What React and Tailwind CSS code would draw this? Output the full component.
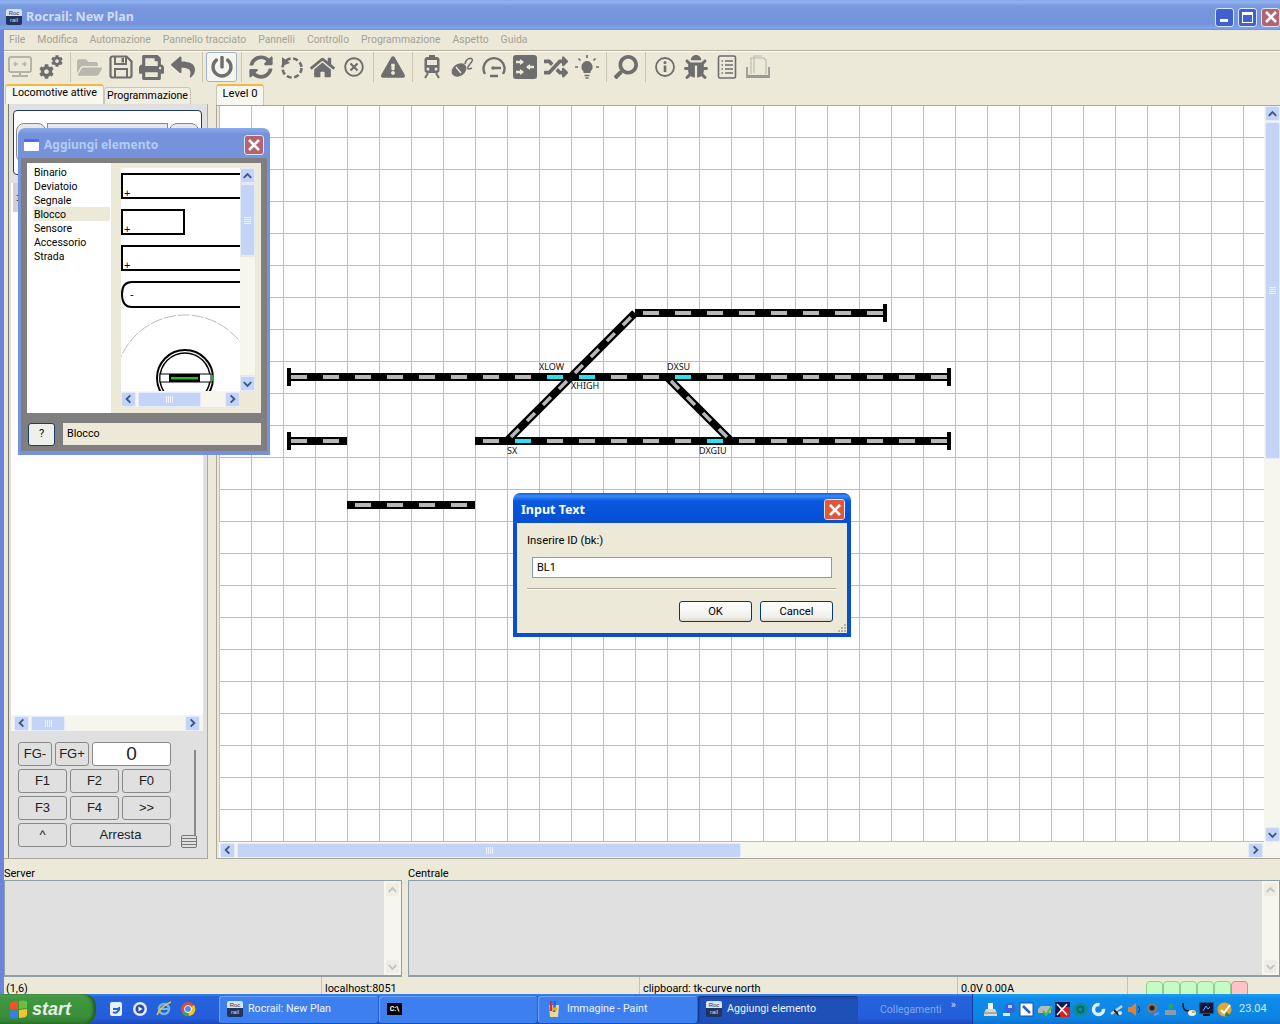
import React from "react";
import { FaCog, FaFolderOpen, FaPrint, FaReply, FaPowerOff, FaSyncAlt, FaHome, FaRegTimesCircle, FaExclamationTriangle, FaRandom, FaSearch, FaBug } from "react-icons/fa";

const Svg = ({ children, c = "#6e6e6e" }) => (
  <svg width="24" height="24" viewBox="0 0 24 24" fill="none" stroke={c} color={c}>{children}</svg>
);

const icons = {
  pc: (
    <Svg c="#b4b4aa">
      <rect x="1" y="2" width="22" height="15" rx="2" strokeWidth="2" />
      <path d="M6 9h4M8 7l-2 2 2 2M18 9h-4M16 7l2 2-2 2" strokeWidth="1.3" />
      <path d="M12 17v5M4 21h16" strokeWidth="2" />
    </Svg>
  ),
  save: (
    <Svg>
      <path d="M1.500 3.500a2 2 0 0 1 2-2h14l5 5v14a2 2 0 0 1-2 2h-17a2 2 0 0 1-2-2z" strokeWidth="2.200" />
      <path d="M6 2v7h11V2" strokeWidth="2" />
      <rect x="12.500" y="3" width="2.500" height="4.500" fill="#6e6e6e" stroke="none" />
      <path d="M6 23v-9h12v9" strokeWidth="2" />
    </Svg>
  ),
  dashed: (
    <Svg>
      <circle cx="12" cy="13" r="9.5" strokeWidth="2.6" strokeDasharray="5 2.6" />
      <path d="M2 2v9l8-3z" fill="#6e6e6e" stroke="none" />
    </Svg>
  ),
  train: (
    <Svg>
      <rect x="4.500" y="2" width="15" height="16" rx="3" fill="#6e6e6e" stroke="none" />
      <rect x="7" y="5" width="10" height="5" fill="#ece9d8" stroke="none" />
      <circle cx="8" cy="14" r="1.500" fill="#ece9d8" stroke="none" />
      <circle cx="16" cy="14" r="1.500" fill="#ece9d8" stroke="none" />
      <path d="M9 1h6M8 18l-3 5M16 18l3 5" strokeWidth="2" />
    </Svg>
  ),
  mouse: (
    <Svg>
      <ellipse cx="8" cy="15" rx="8" ry="6" fill="#6e6e6e" stroke="none" transform="rotate(-35 8 15)" />
      <path d="M5 12l5 6" stroke="#ece9d8" strokeWidth="1.4" />
      <path d="M14 9c1-5 5-7 7-5s-3 5-4 8 2 2 4 1" strokeWidth="1.5" />
    </Svg>
  ),
  gauge: (
    <Svg>
      <path d="M3 19a10.5 10.5 0 1 1 18 0" strokeWidth="2.4" />
      <path d="M12 13h7M8 21h8" strokeWidth="2.4" />
      <circle cx="11" cy="13" r="1.8" fill="#6e6e6e" stroke="none" />
    </Svg>
  ),
  net: (
    <Svg>
      <rect x="0" y="0" width="24" height="24" rx="3" fill="#6e6e6e" stroke="none" />
      <path d="M3 7h7M3 17h7M14 12h7" stroke="#ece9d8" strokeWidth="2.4" />
      <path d="M7 4l4 3-4 3zM7 14l4 3-4 3zM17 9l-4 3 4 3z" fill="#ece9d8" stroke="none" />
    </Svg>
  ),
  bulb: (
    <Svg>
      <path d="M12 6a6 6 0 0 0-3.5 10.5V18h7v-1.500A6 6 0 0 0 12 6z" fill="#6e6e6e" stroke="none" />
      <path d="M9.500 20.500h5M10.500 23h3M12 0v3M0 12h3M21 12h3M3.500 3.500l2 2M20.500 3.500l-2 2" strokeWidth="1.700" />
    </Svg>
  ),
  info: (
    <Svg>
      <circle cx="12" cy="12" r="9" strokeWidth="1.800" />
      <circle cx="12" cy="7.500" r="1.500" fill="#6e6e6e" stroke="none" />
      <path d="M12 10.500v6.500" strokeWidth="2.600" />
    </Svg>
  ),
  list: (
    <Svg>
      <rect x="3.500" y="1" width="17" height="22" rx="1.500" strokeWidth="1.600" />
      <path d="M6.500 6h1.500M10 6h8M6.500 10h1.500M10 10h8M6.500 14h1.500M10 14h8M6.500 18h1.500M10 18h8" strokeWidth="1.400" />
    </Svg>
  ),
  copy: (
    <Svg c="#9a9a92">
      <path d="M1 12v10h22V12" strokeWidth="1.800" />
      <path d="M5 19V3h13l2 2v14" strokeWidth="1.100" stroke="#b8b8b0" />
      <path d="M8 18V1h8" strokeWidth="1.100" stroke="#b8b8b0" />
      <path d="M1 21h22" strokeWidth="2.200" />
    </Svg>
  ),
};

const Sep = () => (
  <div className="w-[8px] h-[30px] flex justify-center shrink-0">
    <div className="w-px h-full bg-[#c8c5b4]" />
  </div>
);
const Btn = ({ children, active }) => (
  <div className={active ? "w-[31px] h-[30px] shrink-0 flex items-center justify-center rounded-[3px] border border-[#a3b1c9] bg-[#f6f6f0]" : "w-[31px] h-[30px] shrink-0 flex items-center justify-center"}>
    {children}
  </div>
);
const G = "#6e6e6e";

const Toolbar = () => (
  <div className="h-[32px] flex items-start">
    <Btn>{icons.pc}</Btn>
    <Btn>
      <span className="relative block w-[24px] h-[24px]">
        <span className="absolute left-0 bottom-0"><FaCog size={15} color={G} /></span>
        <span className="absolute right-0 top-0"><FaCog size={12} color={G} /></span>
      </span>
    </Btn>
    <Sep />
    <Btn><FaFolderOpen size={25} color="#b8b8ae" /></Btn>
    <Btn>{icons.save}</Btn>
    <Btn><FaPrint size={25} color={G} /></Btn>
    <Btn><FaReply size={24} color={G} /></Btn>
    <Sep />
    <Btn active><FaPowerOff size={22} color={G} /></Btn>
    <Sep />
    <Btn><FaSyncAlt size={24} color={G} /></Btn>
    <Btn>{icons.dashed}</Btn>
    <Btn><FaHome size={25} color={G} /></Btn>
    <Btn><FaRegTimesCircle size={20} color={G} /></Btn>
    <Sep />
    <Btn><FaExclamationTriangle size={24} color={G} /></Btn>
    <Sep />
    <Btn>{icons.train}</Btn>
    <Btn>{icons.mouse}</Btn>
    <Btn>{icons.gauge}</Btn>
    <Btn>{icons.net}</Btn>
    <Btn><FaRandom size={24} color={G} /></Btn>
    <Btn>{icons.bulb}</Btn>
    <Sep />
    <Btn><span className="scale-x-[-1] flex"><FaSearch size={24} color={G} /></span></Btn>
    <Sep />
    <Btn>{icons.info}</Btn>
    <Btn><FaBug size={24} color={G} /></Btn>
    <Btn>{icons.list}</Btn>
    <Btn>{icons.copy}</Btn>
  </div>
);

const arrows = { up: "M3 9l4-4 4 4", down: "M3 5l4 4 4-4", left: "M9 3L5 7l4 4", right: "M5 3l4 4-4 4" };
const SBtn = ({ dir, off }) => (
  <div className={off ? "w-[15px] h-[15px] shrink-0 rounded-[2px] border border-[#f8f8f2] bg-[#eeede6] flex items-center justify-center" : "w-[15px] h-[15px] shrink-0 rounded-[2px] border border-[#e4ecfc] bg-[#c3d4f7] flex items-center justify-center"}>
    <svg width="14" height="14" viewBox="0 0 14 14" fill="none" stroke={off ? "#c4c4bc" : "#3f5585"} strokeWidth="2"><path d={arrows[dir]} /></svg>
  </div>
);
const Grip = ({ v }) => (
  <div className={v ? "flex flex-col gap-px" : "flex gap-px"}>
    {[0, 1, 2, 3].map((i) => <div key={i} className={v ? "w-[7px] h-px bg-[#eef3fd]" : "w-px h-[7px] bg-[#eef3fd]"} />)}
  </div>
);

const MenuItems = ["File", "Modifica", "Automazione", "Pannello tracciato", "Pannelli", "Controllo", "Programmazione", "Aspetto", "Guida"];

const Fn = ({ w, children, white, big }) => (
  <div className={`${w} ${white ? "bg-white" : "bg-[#e0e0e0]"} ${big ? "text-[19px]" : "text-[13px]"} h-[24px] shrink-0 rounded-[3px] border border-[#8a8a8a] flex items-center justify-center text-[#222] font-['Liberation_Sans',sans-serif]`}>
    {children}
  </div>
);

const LeftPanel = () => (
  <div className="w-[204px] shrink-0 flex flex-col">
    <div className="h-[20px] flex items-start pl-px">
      <div className="w-[99px] h-[20px] shrink-0 rounded-t-[3px] border-t-[2px] border-t-[#f5b93e] border-x border-x-[#c9c6b6] bg-[#f7f6ef] flex items-center justify-center pb-[3px] text-[10.700px] text-black">Locomotive attive</div>
      <div className="mt-[3px] w-[87px] h-[18px] rounded-t-[3px] border border-[#c9c6b6] bg-[#f0eee2] flex items-center justify-center pb-px text-[10.600px] text-black">Programmazione</div>
    </div>
    <div className="flex-1 flex flex-col pl-[4px] border-r border-b border-r-[#aca899] border-b-[#aca899]">
      <div className="flex-1 flex flex-col border-l border-l-[#7c7c70] bg-[#e0e0e0] pr-[4px]">
        <div className="mt-[6px] ml-[4px] mr-px h-[65px] rounded-[4px] border border-[#1c3a6b] bg-white px-[2px] pt-[12px] flex gap-px">
          <div className="w-[30px] h-[40px] rounded-[8px] border border-[#888] bg-[#e8e8e8]" />
          <div className="flex-1 h-[40px] border border-[#888] bg-[#e8e8e8]" />
          <div className="w-[30px] h-[40px] rounded-[8px] border border-[#888] bg-[#e8e8e8]" />
        </div>
        <div className="mt-[8px] ml-[2px] flex-1 flex flex-col bg-white">
          <div className="h-[29px] ml-[2px] bg-[#d0d0d0] flex items-center pl-[3px] text-[10px]">:</div>
        </div>
        <div className="ml-[2px] h-[16px] flex items-center bg-[#f6f5ee] px-[3px] gap-[2px]">
          <SBtn dir="left" />
          <div className="w-[34px] h-[15px] rounded-[2px] border border-[#e4ecfc] bg-[#c3d4f7] flex items-center justify-center"><Grip /></div>
          <div className="flex-1" />
          <SBtn dir="right" />
        </div>
        <div className="h-[127px] pt-[11px] pl-[9px] flex">
          <div className="w-[153px] flex flex-col gap-[3px]">
            <div className="flex gap-[3px]">
              <Fn w="w-[34px]">FG-</Fn>
              <Fn w="w-[34px]">FG+</Fn>
              <Fn w="w-[79px]" white big>0</Fn>
            </div>
            <div className="flex gap-[3px]"><Fn w="w-[49px]">F1</Fn><Fn w="w-[49px]">F2</Fn><Fn w="w-[49px]">F0</Fn></div>
            <div className="flex gap-[3px]"><Fn w="w-[49px]">F3</Fn><Fn w="w-[49px]">F4</Fn><Fn w="w-[49px]">&gt;&gt;</Fn></div>
            <div className="flex gap-[3px]"><Fn w="w-[49px]">^</Fn><Fn w="w-[101px]">Arresta</Fn></div>
          </div>
          <div className="relative ml-[10px] w-[16px] h-[98px] mt-[8px] flex justify-end">
            <div className="w-[2px] h-[88px] mr-px bg-[#8a8a8a]" />
            <div className="absolute left-0 bottom-0 w-[16px] h-[13px] rounded-[2px] border border-[#777] flex flex-col justify-evenly bg-[#e0e0e0]">
              <div className="h-px bg-[#777]" /><div className="h-px bg-[#777]" /><div className="h-px bg-[#777]" />
            </div>
          </div>
        </div>
      </div>
    </div>
  </div>
);

const Track = ({ x1, y1, x2 }) => {
  const dashes = [];
  for (let x = x1 + 8 - ((x1 + 8 - 291) % 32 + 32) % 32; x < x2 - 3; x += 32) {
    if (x >= x1) dashes.push(x);
  }
  return (
    <g>
      <rect x={x1} y={y1 - 4} width={x2 - x1} height="8" fill="#000" />
      {dashes.map((x) => <rect key={x} x={x} y={y1 - 2} width="16" height="4" fill={[`547,377`, `579,377`, `675,377`, `515,441`, `707,441`].includes(`${x},${y1}`) ? "#22e6ee" : "#b8b8b8"} />)}
    </g>
  );
};
const Diag = ({ x1, y1, x2, y2 }) => (
  <g>
    <line x1={x1} y1={y1} x2={x2} y2={y2} stroke="#000" strokeWidth="8" />
    <line x1={x1} y1={y1} x2={x2} y2={y2} stroke="#b8b8b8" strokeWidth="3.500" strokeDasharray="11.3 11.3" strokeDashoffset="-5.65" />
  </g>
);
const End = ({ x, y }) => <rect x={x} y={y - 9} width="4" height="18" fill="#000" />;
const Lbl = ({ x, y, children }) => (
  <text x={x} y={y} fontSize="9" fill="#111" fontFamily="'Noto Sans',sans-serif">{children}</text>
);

const CanvasPanel = () => (
  <div className="flex-1 flex flex-col ml-[8px] min-w-0">
    <div className="h-[21px] flex items-start">
      <div className="w-[48px] h-[21px] rounded-t-[3px] border-t-[2px] border-t-[#f5b93e] border-x border-x-[#c9c6b6] bg-[#f7f6ef] flex items-center justify-center pb-[3px] text-[11.200px] text-black">Level 0</div>
    </div>
    <div className="flex-1 flex flex-col border-l border-b border-t border-[#aca899] pl-[2px] bg-[#ece9d8]">
      <div className="flex-1 flex">
        <div className="relative flex-1 bg-white bg-[linear-gradient(to_right,transparent_31px,#bdbdbd_31px),linear-gradient(to_bottom,transparent_31px,#bdbdbd_31px)] bg-[size:32px_32px] bg-[position:1px_0px] overflow-hidden">
          <svg className="absolute left-0 top-0" width="1045" height="736" viewBox="219 106 1045 736">
            <Track x1={635} y1={313} x2={885} />
            <Track x1={287} y1={377} x2={949} />
            <Track x1={287} y1={441} x2={347} />
            <Track x1={475} y1={441} x2={949} />
            <Track x1={347} y1={505} x2={475} />
            <Diag x1={507} y1={441} x2={635} y2={313} />
            <Diag x1={667} y1={377} x2={731} y2={441} />
            <End x={883} y={313} /><End x={287} y={377} /><End x={947} y={377} /><End x={287} y={441} /><End x={947} y={441} />
            <Lbl x={539} y={370}>XLOW</Lbl>
            <Lbl x={571} y={389}>XHIGH</Lbl>
            <Lbl x={507} y={454}>SX</Lbl>
            <Lbl x={667} y={370}>DXSU</Lbl>
            <Lbl x={699} y={454}>DXGIU</Lbl>
          </svg>
        </div>
        <div className="w-[16px] shrink-0 flex flex-col gap-px items-center bg-[#f6f5ee]">
          <SBtn dir="up" />
          <div className="w-[15px] h-[337px] rounded-[2px] border border-[#e4ecfc] bg-[#c3d4f7] flex items-center justify-center"><Grip v /></div>
          <div className="flex-1" />
          <SBtn dir="down" />
        </div>
      </div>
      <div className="h-[16px] flex items-center bg-[#f6f5ee] pl-px pr-[17px] gap-[2px]">
        <SBtn dir="left" />
        <div className="w-[504px] h-[15px] rounded-[2px] border border-[#e4ecfc] bg-[#c3d4f7] flex items-center justify-center"><Grip /></div>
        <div className="flex-1" />
        <SBtn dir="right" />
      </div>
    </div>
  </div>
);

const LogBox = ({ label, className }) => (
  <div className={`${className} flex flex-col`}>
    <div className="h-[14px] text-[11px] leading-[15px] text-black">{label}</div>
    <div className="flex-1 flex border-t border-b-[2px] border-x border-[#8e9fa6] bg-[#e0e0e0]">
      <div className="flex-1" />
      <div className="w-[17px] flex flex-col justify-between bg-[#f6f5ee] py-px items-center">
        <SBtn dir="up" off /><SBtn dir="down" off />
      </div>
    </div>
  </div>
);

const Status = () => (
  <div className="h-[17px] flex text-[10.900px] leading-[23px] text-black overflow-hidden">
    <div className="w-[317px] pl-[2px]">(1,6)</div>
    <div className="w-[318px] pl-[3px] border-l border-l-[#c6c3b2]">localhost:8051</div>
    <div className="w-[318px] pl-[3px] border-l border-l-[#c6c3b2]">clipboard: tk-curve north</div>
    <div className="w-[170px] pl-[3px] border-l border-l-[#c6c3b2]">0.0V 0.00A</div>
    <div className="flex-1 border-l border-l-[#c6c3b2] pl-[18px] pt-[4px] flex">
      {[0, 1, 2, 3, 4].map((i) => <div key={i} className="w-[17px] h-[20px] rounded-t-[4px] border border-[#8ed08e] bg-[#c4fcc4]" />)}
      <div className="w-[17px] h-[20px] rounded-t-[4px] border border-[#d88a8a] bg-[#fcc4c4]" />
    </div>
  </div>
);

const RocIcon = () => (
  <div className="w-[16px] h-[16px] shrink-0 rounded-[2px] overflow-hidden flex flex-col font-['Liberation_Sans',sans-serif] text-[6px] leading-[8px] text-center">
    <div className="h-[7px] bg-[#d8e2f4] text-[#334]">Roc</div>
    <div className="flex-1 bg-[#1e3560] text-[#dde]">rail</div>
  </div>
);

const TBtn = ({ w, active, icon, children }) => (
  <div className={`${w} h-[27px] shrink-0 rounded-[3px] flex items-center gap-[5px] pl-[8px] text-[10.700px] text-[#eef3ff] ${active ? "bg-[#1f50b8] shadow-[inset_1px_1px_2px_#12357f]" : "bg-[#3d7fee] shadow-[inset_1px_1px_1px_#6fa5f7]"}`}>
    {icon}
    <span className="pt-px">{children}</span>
  </div>
);

const T = ({ children }) => <svg width="15" height="15" viewBox="0 0 15 15" className="shrink-0">{children}</svg>;

const trayIcons = [
  <T key="0"><path d="M3 7h9l2 4v3H1v-3z" fill="#d8d8d0" /><path d="M5 1h5v6H5z" fill="#f2f2f2" /><path d="M1 11h13" stroke="#777" /></T>,
  <T key="1"><circle cx="9" cy="6" r="5.500" fill="#3a62d8" /><path d="M2 11h7v3H2z" fill="#e6e6e6" /><path d="M7 3h4v3H7z" fill="#b8d0f4" /></T>,
  <T key="2"><rect x="1" y="1" width="13" height="13" fill="#fff" stroke="#1c4ea8" /><path d="M4 4l7 7" stroke="#2a63c8" strokeWidth="2.500" /></T>,
  <T key="3"><path d="M1 7l3-3h9l1 3v4H1z" fill="#b8b8b4" /><path d="M6 9l3 4 6-9" fill="none" stroke="#3cc43c" strokeWidth="2" /></T>,
  <T key="4"><rect x="0" y="0" width="15" height="15" fill="#101850" /><path d="M5 5h10v10H5z" fill="#d82020" /><path d="M2 2l10 11M12 2L2 13" stroke="#fff" strokeWidth="1.500" /></T>,
  <T key="5"><circle cx="7.500" cy="7.500" r="7" fill="#0d8d8f" /><circle cx="7.500" cy="7.500" r="3" fill="none" stroke="#0a6c70" strokeWidth="2" /></T>,
  <T key="6"><circle cx="7.500" cy="7.500" r="5" fill="none" stroke="#dff1ff" strokeWidth="3.500" strokeDasharray="24 6" /></T>,
  <T key="7"><path d="M2 12l11-8" stroke="#d0d0d0" strokeWidth="2.500" /><path d="M5 8l5 5" stroke="#222" strokeWidth="2" /><circle cx="11" cy="11" r="2" fill="#e6e6e6" /></T>,
  <T key="8"><path d="M1 5h3l5-4v13l-5-4H1z" fill="#e08030" /><path d="M11 4c2 2 2 5 0 7" stroke="#222" fill="none" /></T>,
  <T key="9"><circle cx="7" cy="6" r="5.500" fill="#777" /><circle cx="7" cy="6" r="2.500" fill="#222" /><path d="M9 13l5-2" stroke="#7b8ee8" strokeWidth="2" /></T>,
  <T key="10"><path d="M2 8h11v5H2z" fill="#8a9ab0" /><path d="M6 1l5 3-5 4z" fill="#22b04a" /></T>,
  <T key="11"><path d="M2 1c0 6 1 8 6 8" fill="none" stroke="#111" strokeWidth="1.500" /><ellipse cx="11" cy="11" rx="4" ry="3" fill="#eee" /><path d="M11 10h3" stroke="#e0b020" strokeWidth="2" /></T>,
  <T key="12"><rect x="1" y="1" width="13" height="10" fill="#101840" stroke="#222" /><path d="M4 9l3-5 2 3 2-2" stroke="#6fa8f0" fill="none" /><path d="M4 13h7" stroke="#111" strokeWidth="2" /></T>,
  <T key="13"><circle cx="7.500" cy="7.500" r="7" fill="#e0a830" /><path d="M4 8l3 3 6-8" fill="none" stroke="#fff" strokeWidth="2" /><path d="M9 10l5 4H8z" fill="#228838" /></T>,
];

const Taskbar = () => (
  <div className="h-[30px] shrink-0 flex items-center bg-[linear-gradient(to_bottom,#3e86f2_0px,#2563dc_3px,#245edb_24px,#1a49b8_30px)]">
    <div className="w-[96px] h-[30px] shrink-0 rounded-r-[12px] bg-[linear-gradient(to_bottom,#5fa65f_0px,#3f983f_4px,#3a8f3a_22px,#2f7a2f_30px)] flex items-center pl-[10px] gap-[5px] shadow-[inset_-3px_0_3px_#235f23]">
      <div className="grid grid-cols-2 gap-px w-[17px] h-[17px] -skew-y-6 shrink-0">
        <div className="bg-[#e8562a] rounded-tl-[3px]" /><div className="bg-[#6cbf3c] rounded-tr-[3px]" />
        <div className="bg-[#3b7ee8] rounded-bl-[3px]" /><div className="bg-[#f4c430] rounded-br-[3px]" />
      </div>
      <span className="font-['Liberation_Sans',sans-serif] italic font-bold text-[18px] text-[#e8eee8]">start</span>
    </div>
    <div className="w-[123px] shrink-0 flex items-center pl-[12px] gap-[8px]">
      <svg width="16" height="16" viewBox="0 0 16 16"><rect x="2" y="1" width="12" height="14" rx="2" fill="#e8f0fc" /><path d="M5 11c3 2 7-1 6-5M5 8h6" stroke="#2a68c8" strokeWidth="2" fill="none" /></svg>
      <svg width="16" height="16" viewBox="0 0 16 16"><circle cx="8" cy="8" r="7" fill="#e8e8ef" /><circle cx="8" cy="8" r="4.500" fill="#2a4fa8" /><path d="M6.500 5.500l4 2.500-4 2.500z" fill="#fff" /></svg>
      <svg width="16" height="16" viewBox="0 0 16 16"><ellipse cx="8" cy="8" rx="5" ry="5" fill="none" stroke="#6fb8ea" strokeWidth="2.500" /><path d="M4 8h8" stroke="#6fb8ea" strokeWidth="2" /><path d="M1 14c2-5 8-11 14-13" stroke="#f0c040" strokeWidth="1.500" fill="none" /></svg>
      <svg width="16" height="16" viewBox="0 0 16 16"><circle cx="8" cy="8" r="7" fill="#dd4b39" /><path d="M8 8L2 12a7 7 0 0 0 7 3z" fill="#3aa757" /><path d="M8 8l1 7a7 7 0 0 0 5-11z" fill="#fbc116" /><circle cx="8" cy="8" r="3.500" fill="#4a8af4" stroke="#fff" /></svg>
    </div>
    <TBtn w="w-[159px]" icon={<RocIcon />}>Rocrail: New Plan</TBtn>
    <div className="w-px shrink-0" />
    <TBtn w="w-[158px]" icon={<div className="w-[15px] h-[12px] bg-black text-white text-[7px] leading-[12px] text-center font-bold">C:\</div>} />
    <div className="w-px shrink-0" />
    <TBtn w="w-[159px]" icon={<svg width="16" height="18" viewBox="0 0 16 18"><path d="M3 5h10l-1 12H4z" fill="#e8d8a0" /><path d="M5 1v10" stroke="#d83030" strokeWidth="2.500" /><path d="M9 1l-1 11" stroke="#3060d8" strokeWidth="2.500" /><path d="M6 9h5" stroke="#e0b020" strokeWidth="3" /></svg>}>Immagine - Paint</TBtn>
    <div className="w-px shrink-0" />
    <TBtn w="w-[160px]" active icon={<RocIcon />}>Aggiungi elemento</TBtn>
    <div className="w-[114px] shrink-0 flex items-center pl-[22px] pt-px text-[10.500px] text-[#7fa8ea]">
      <span>Collegamenti</span>
      <span className="ml-[9px] -mt-[9px] text-[11px] text-[#c9dcfa]">»</span>
    </div>
    <div className="flex-1 h-[30px] flex items-center pl-[10px] gap-[3px] border-l border-l-[#0c3f9a] bg-[linear-gradient(to_bottom,#1aa0f2_0px,#0f8cea_4px,#0c84e4_24px,#0b6fd0_30px)]">
      {trayIcons}
      <span className="ml-[4px] pt-px text-[11px] text-[#d6e8fb]">23.04</span>
    </div>
  </div>
);

const WinBtn = ({ children, red, w = "w-[19px]", h = "h-[19px]" }) => (
  <div className={`${w} ${h} shrink-0 rounded-[3px] border border-[#dbe5fa] flex items-center justify-center ${red ? "bg-[#b5636f]" : "bg-[#3f62cf]"}`}>{children}</div>
);
const XIcon = ({ s = 14 }) => (
  <svg width={s} height={s} viewBox="0 0 14 14" stroke="#fff" strokeWidth="2.600"><path d="M2 2l10 10M12 2L2 12" /></svg>
);

const Preview = () => (
  <svg width="119" height="223" viewBox="121 168 119 223" className="block">
    <g fill="none" stroke="#000" strokeWidth="2">
      <path d="M240 174H122v24h118" />
      <path d="M122 210h62v24h-62z" />
      <path d="M240 246H122v24h118" />
      <path d="M240 282H132q-10 0-10 12 0 13 10 13h108" />
    </g>
    <g fontSize="11" fill="#000" fontFamily="'Liberation Sans',sans-serif">
      <text x="124" y="197">+</text>
      <text x="124" y="233">+</text>
      <text x="124" y="269">+</text>
      <text x="130" y="298">-</text>
    </g>
    <circle cx="185" cy="385" r="70" fill="none" stroke="#bbb" strokeDasharray="12 2" />
    <circle cx="185" cy="378" r="28" fill="none" stroke="#000" strokeWidth="2" />
    <circle cx="185" cy="378" r="25" fill="none" stroke="#000" strokeWidth="1.500" />
    <rect x="160" y="374" width="51" height="8" fill="#fff" stroke="#000" />
    <rect x="169" y="374" width="31" height="8" fill="#000" />
    <rect x="171" y="377" width="27" height="2.500" fill="#22b838" />
    <rect x="211" y="375" width="3" height="6" fill="#22a838" />
  </svg>
);

const AddDialog = () => (
  <div className="absolute left-[18px] top-[128px] w-[252px] h-[327px] rounded-t-[7px] bg-[#6f8fdc] flex flex-col px-[3px] pb-[4px] bg-[linear-gradient(to_bottom,#8cabec_0px,#7593dc_6px,#7593dc_30px)]">
    <div className="h-[30px] shrink-0 flex items-center pt-[4px] pl-[3px] pr-[3px] gap-[5px]">
      <div className="w-[15px] h-[12px] rounded-[1px] border-t-[3px] border-t-[#4e6fd8] bg-white" />
      <span className="font-['Noto_Sans',sans-serif] font-bold text-[12px] text-[#b6caf2]">Aggiungi elemento</span>
      <div className="flex-1" />
      <WinBtn red w="w-[20px]" h="h-[20px]"><XIcon /></WinBtn>
    </div>
    <div className="flex-1 bg-[#7f7f7f] flex flex-col pt-[5px] px-[6px] pb-[5px]">
      <div className="h-[250px] flex">
        <div className="w-[84px] shrink-0 bg-white pt-[2px] pl-[6px] pr-px text-[10.500px] text-black leading-[14px]">
          {["Binario", "Deviatoio", "Segnale", "Blocco", "Sensore", "Accessorio", "Strada"].map((s) => (
            <div key={s} className={s === "Blocco" ? "h-[14px] pl-px leading-[16px] bg-[#ece9d8]" : "h-[14px] pl-px leading-[16px]"}>{s}</div>
          ))}
        </div>
        <div className="flex-1 bg-[#ece9d8] pl-[10px] pt-[5px]">
          <div className="flex h-[223px]">
            <div className="w-[119px] shrink-0 bg-white overflow-hidden"><Preview /></div>
            <div className="w-[15px] flex flex-col gap-px">
              <SBtn dir="up" />
              <div className="w-[15px] h-[72px] rounded-[2px] border border-[#e4ecfc] bg-[#c3d4f7] flex items-center justify-center"><Grip v /></div>
              <div className="flex-1 bg-[#f6f5ee]" />
              <SBtn dir="down" />
            </div>
          </div>
          <div className="w-[119px] h-[16px] flex items-center gap-[2px] bg-[#f6f5ee]">
            <SBtn dir="left" />
            <div className="w-[63px] h-[15px] rounded-[2px] border border-[#e4ecfc] bg-[#c3d4f7] flex items-center justify-center"><Grip /></div>
            <div className="flex-1" />
            <SBtn dir="right" />
          </div>
        </div>
      </div>
      <div className="mt-[10px] flex items-start">
        <div className="ml-px w-[27px] h-[23px] rounded-[3px] border border-[#1c3a6b] bg-[#f0f0ea] flex items-center justify-center text-[11px] text-black">?</div>
        <div className="ml-[8px] flex-1 h-[22px] bg-[#ece9d8] flex items-center pl-[4px] text-[10.700px] text-black">Blocco</div>
      </div>
    </div>
  </div>
);

const XpBtn = ({ children }) => (
  <div className="w-[73px] h-[21px] rounded-[3px] border border-[#003c74] bg-[linear-gradient(to_bottom,#ffffff,#f0f0ea_80%,#dcd8c8)] flex items-center justify-center pt-px text-[11.200px] text-black">{children}</div>
);

const InputDialog = () => (
  <div className="absolute left-[513px] top-[493px] w-[338px] h-[144px] rounded-t-[7px] bg-[linear-gradient(to_bottom,#0a5ee6_0px,#3a8cf6_3px,#0a58e0_8px,#0552d8_22px,#0a4fd0_30px)] flex flex-col px-[4px] pb-[4px]">
    <div className="h-[30px] shrink-0 flex items-center pt-[3px] pl-[4px] pr-[2px]">
      <span className="pt-px font-['Noto_Sans',sans-serif] font-bold text-[12.500px] text-white">Input Text</span>
      <div className="flex-1" />
      <WinBtn red w="w-[21px]" h="h-[21px]">
        <div className="w-full h-full rounded-[2px] bg-[#e0583a] flex items-center justify-center"><XIcon /></div>
      </WinBtn>
    </div>
    <div className="relative flex-1 bg-[#ece9d8] flex flex-col px-[10px] pt-[11px]">
      <div className="h-[14px] text-[11.300px] leading-[14px] text-black">Inserire ID (bk:)</div>
      <div className="mt-[9px] ml-[5px] w-[300px] h-[21px] border border-[#7f9db9] bg-white flex items-center pl-[4px] pt-px text-[11px] text-black">BL1</div>
      <div className="mt-[10px] w-[309px] h-[2px] border-t border-t-[#aca899] border-b border-b-white" />
      <div className="mt-[11px] pr-[4px] flex justify-end gap-[8px]"><XpBtn>OK</XpBtn><XpBtn>Cancel</XpBtn></div>
      <div className="absolute right-[1px] bottom-[1px] grid grid-cols-3 gap-px">
        {[0, 1, 2, 3, 4, 5, 6, 7, 8].map((i) => <div key={i} className={[0, 1, 3].includes(i) ? "w-[2px] h-[2px]" : "w-[2px] h-[2px] bg-[#b8b4a0]"} />)}
      </div>
    </div>
  </div>
);

export default function App() {
  return (
    <div className="relative w-[1280px] h-[1024px] overflow-hidden flex flex-col bg-[#ece9d8] font-['Roboto',sans-serif]">
      <div className="h-[30px] shrink-0 flex items-center pt-[4px] pl-[6px] bg-[linear-gradient(to_bottom,#86a6e8_0px,#8fb2f0_2px,#7897de_6px,#7493dc_24px,#80a4ea_28px,#6f8de0_30px)]">
        <RocIcon />
        <span className="ml-[4px] pt-px font-['Noto_Sans',sans-serif] font-bold text-[12.500px] text-[#cfdcf6]">Rocrail: New Plan</span>
        <div className="flex-1" />
        <div className="flex gap-[4px] items-center">
          <WinBtn><div className="w-[8px] h-[3px] mt-[6px] -ml-[1px] bg-white" /></WinBtn>
          <WinBtn><div className="w-[11px] h-[11px] border border-t-[3px] border-[#fff]" /></WinBtn>
          <WinBtn red><XIcon /></WinBtn>
        </div>
      </div>
      <div className="flex-1 flex flex-col border-l-[4px] border-l-[#6a86dc] min-h-0">
        <div className="h-[20px] shrink-0 flex items-center pl-[5px] pb-px gap-[12px] text-[10.400px] text-[#a3a296]">
          {MenuItems.map((m) => <span key={m}>{m}</span>)}
        </div>
        <div className="h-[2px] border-t border-t-[#b3b0a2] border-b border-b-white" />
        <Toolbar />
        <div className="h-[775px] shrink-0 flex">
          <LeftPanel />
          <CanvasPanel />
        </div>
        <div className="h-[7px] shrink-0" />
        <div className="h-[111px] shrink-0 flex gap-[6px]">
          <LogBox label="Server" className="w-[398px]" />
          <LogBox label="Centrale" className="flex-1" />
        </div>
        <Status />
      </div>
      <Taskbar />
      <AddDialog />
      <InputDialog />
    </div>
  );
}
